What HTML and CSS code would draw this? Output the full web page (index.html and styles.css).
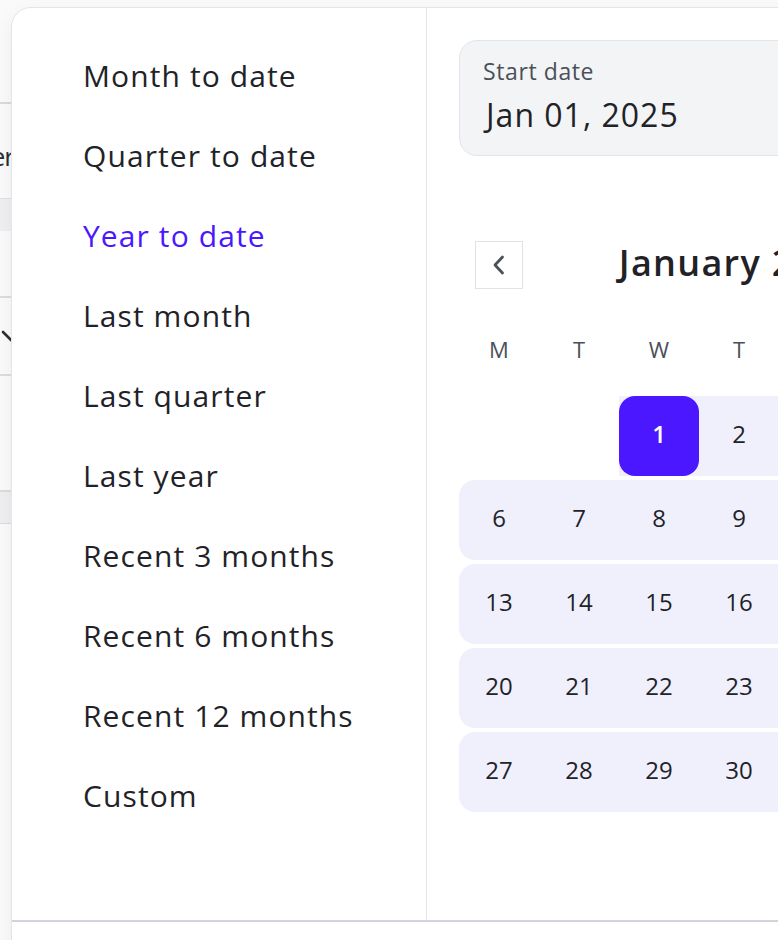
FILE: index.html
```html
<!DOCTYPE html>
<html lang="en">
<head>
<meta charset="utf-8">
<title>Date range picker</title>
<link rel="stylesheet" href="styles.css">
</head>
<body>
<div class="page">
  <div class="bg-list">
    <div class="bg-top"></div>
    <div class="bg-row bg-row-text"><span>Customer</span></div>
    <div class="bg-band"></div>
    <div class="bg-row bg-row-plain"></div>
    <div class="bg-row bg-row-chevron">
      <svg width="24" height="14" viewBox="0 0 24 14"><path d="M2 2 L11 11 L20 2" fill="none" stroke="#2a2e35" stroke-width="2.6" stroke-linecap="round" stroke-linejoin="round"/></svg>
    </div>
    <div class="bg-row bg-row-tall"></div>
    <div class="bg-band bg-band-2"></div>
    <div class="bg-rest"></div>
  </div>

  <div class="popover">
    <div class="pop-body">
      <ul class="presets">
        <li class="preset">Month to date</li>
        <li class="preset">Quarter to date</li>
        <li class="preset preset-active">Year to date</li>
        <li class="preset">Last month</li>
        <li class="preset">Last quarter</li>
        <li class="preset">Last year</li>
        <li class="preset">Recent 3 months</li>
        <li class="preset">Recent 6 months</li>
        <li class="preset">Recent 12 months</li>
        <li class="preset">Custom</li>
      </ul>
      <div class="range-pane">
        <div class="date-fields">
          <div class="date-field">
            <div class="date-label">Start date</div>
            <div class="date-value">Jan 01, 2025</div>
          </div>
          <div class="date-field">
            <div class="date-label">End date</div>
            <div class="date-value">Jan 31, 2025</div>
          </div>
        </div>

        <div class="calendar">
          <div class="cal-header">
            <button class="nav-btn" aria-label="Previous month">
              <svg width="20" height="22" viewBox="0 0 20 22"><path d="M13.5 3 L6 11 L13.5 19" fill="none" stroke="#4b5058" stroke-width="2.8" stroke-linecap="round" stroke-linejoin="round"/></svg>
            </button>
            <div class="cal-title">January 2025</div>
            <button class="nav-btn" aria-label="Next month">
              <svg width="20" height="22" viewBox="0 0 20 22"><path d="M6.5 3 L14 11 L6.5 19" fill="none" stroke="#4b5058" stroke-width="2.8" stroke-linecap="round" stroke-linejoin="round"/></svg>
            </button>
          </div>
          <div class="weekdays">
            <span>M</span><span>T</span><span>W</span><span>T</span><span>F</span><span>S</span><span>S</span>
          </div>
          <div class="days">
            <span class="day day-empty"></span>
            <span class="day day-empty"></span>
            <span class="day in-range"><span class="day-selected">1</span></span>
            <span class="day in-range">2</span>
            <span class="day in-range">3</span>
            <span class="day in-range">4</span>
            <span class="day in-range range-end">5</span>

            <span class="day in-range range-start">6</span>
            <span class="day in-range">7</span>
            <span class="day in-range">8</span>
            <span class="day in-range">9</span>
            <span class="day in-range">10</span>
            <span class="day in-range">11</span>
            <span class="day in-range range-end">12</span>

            <span class="day in-range range-start">13</span>
            <span class="day in-range">14</span>
            <span class="day in-range">15</span>
            <span class="day in-range">16</span>
            <span class="day in-range">17</span>
            <span class="day in-range">18</span>
            <span class="day in-range range-end">19</span>

            <span class="day in-range range-start">20</span>
            <span class="day in-range">21</span>
            <span class="day in-range">22</span>
            <span class="day in-range">23</span>
            <span class="day in-range">24</span>
            <span class="day in-range">25</span>
            <span class="day in-range range-end">26</span>

            <span class="day in-range range-start">27</span>
            <span class="day in-range">28</span>
            <span class="day in-range">29</span>
            <span class="day in-range">30</span>
            <span class="day in-range range-end">31</span>
            <span class="day day-empty"></span>
            <span class="day day-empty"></span>
          </div>
        </div>
      </div>
    </div>
    <div class="pop-footer"></div>
  </div>
</div>
</body>
</html>
```

FILE: styles.css
```css
html, body {
  margin: 0;
  padding: 0;
}

body {
  background: #fafafa;
  font-family: "Open Sans", "Noto Sans", sans-serif;
  color: #1f2328;
  overflow: hidden;
}

.page {
  position: relative;
  width: 778px;
  height: 940px;
  overflow: hidden;
}

/* ---------- background page (mostly covered) ---------- */
.bg-list {
  width: 200px;
  display: flex;
  flex-direction: column;
}

.bg-top {
  height: 102px;
}

.bg-row {
  border-top: 2px solid #d6dbdd;
}

.bg-row-text {
  height: 96px;
  box-sizing: border-box;
  width: 11px;
  overflow: hidden;
  display: flex;
  justify-content: flex-end;
  align-items: center;
  padding-top: 10px;
}

.bg-row-text span {
  white-space: nowrap;
  font-size: 26px;
  letter-spacing: -1px;
  color: #2a2e35;
  margin-right: -3px;
}

.bg-band {
  height: 33px;
  background: #efeff1;
  border-top: 1px solid #dfe1e3;
  box-sizing: border-box;
}

.bg-row-plain {
  height: 65px;
  box-sizing: border-box;
  border-top: none;
}

.bg-row-chevron {
  height: 78px;
  box-sizing: border-box;
  border-top: 2px solid #dadcde;
  padding: 32px 0 0 1px;
}

.bg-row-chevron svg {
  display: block;
}

.bg-row-tall {
  height: 116px;
  box-sizing: border-box;
  border-top: 2px solid #dadcde;
}

.bg-band-2 {
  height: 34px;
  border-top: 2px solid #dadcde;
  border-bottom: 1px solid #dadcde;
}

.bg-rest {
  flex: 1;
}

/* ---------- popover ---------- */
.popover {
  position: absolute;
  left: 11px;
  top: 7px;
  width: 1000px;
  height: 1000px;
  background: #ffffff;
  border: 1px solid #e3e5e8;
  border-radius: 20px;
  box-shadow: 0 6px 20px rgba(20, 24, 32, 0.06);
  display: flex;
  flex-direction: column;
  overflow: hidden;
}

.pop-body {
  display: flex;
  height: 912px;
  flex: none;
}

.pop-footer {
  border-top: 2px solid #d1d5db;
  flex: 1;
}

/* presets */
.presets {
  list-style: none;
  margin: 0;
  width: 415px;
  box-sizing: border-box;
  padding: 28px 0 0 71px;
  border-right: 1px solid #e4e5e7;
  flex: none;
}

.preset {
  height: 80px;
  line-height: 80px;
  font-size: 30px;
  letter-spacing: 1.1px;
  color: #1f2328;
  white-space: nowrap;
}

.preset-active {
  color: #4a17ff;
}

/* range pane */
.range-pane {
  padding: 32px 0 0 32px;
  flex: 1;
}

.date-fields {
  display: flex;
  gap: 16px;
}

.date-field {
  width: 360px;
  box-sizing: border-box;
  background: #f3f4f6;
  border: 1px solid #e1e4e8;
  border-radius: 18px;
  padding: 16px 23px 20px 23px;
  display: flex;
  flex-direction: column;
  gap: 10px;
}

.date-label {
  font-size: 23px;
  line-height: 28px;
  letter-spacing: 0.6px;
  color: #4b5058;
}

.date-value {
  font-size: 32px;
  line-height: 40px;
  letter-spacing: 1px;
  color: #1f2328;
  padding-left: 3px;
}

/* calendar */
.calendar {
  width: 560px;
  margin-top: 85px;
}

.cal-header {
  display: flex;
  align-items: center;
  height: 48px;
}

.nav-btn {
  width: 48px;
  height: 48px;
  margin: 0 16px;
  padding: 0;
  background: #ffffff;
  border: 1.5px solid #e0e3e6;
  display: flex;
  align-items: center;
  justify-content: center;
  flex: none;
}

.cal-title {
  flex: 1;
  text-align: center;
  font-size: 36px;
  line-height: 48px;
  padding-bottom: 5px;
  font-weight: 600;
  letter-spacing: 1.3px;
  color: #1f2328;
  white-space: nowrap;
}

.weekdays {
  display: grid;
  grid-template-columns: repeat(7, 80px);
  margin-top: 36px;
  height: 48px;
}

.weekdays span {
  text-align: center;
  font-size: 22px;
  line-height: 48px;
  color: #4b5058;
}

.days {
  display: grid;
  grid-template-columns: repeat(7, 80px);
  grid-auto-rows: 80px;
  row-gap: 4px;
  margin-top: 23px;
}

.day {
  display: flex;
  align-items: center;
  justify-content: center;
  font-size: 24px;
  padding-bottom: 5px;
  box-sizing: border-box;
  color: #1f2328;
}

.in-range {
  background: #f0f0fd;
}

.range-start {
  border-radius: 16px 0 0 16px;
}

.range-end {
  border-radius: 0 16px 16px 0;
}

.day .day-selected {
  width: 80px;
  height: 80px;
  margin-bottom: -5px;
  padding-bottom: 5px;
  box-sizing: border-box;
  border-radius: 16px;
  background: #4a17ff;
  color: #ffffff;
  font-weight: 600;
  display: flex;
  align-items: center;
  justify-content: center;
}
```
